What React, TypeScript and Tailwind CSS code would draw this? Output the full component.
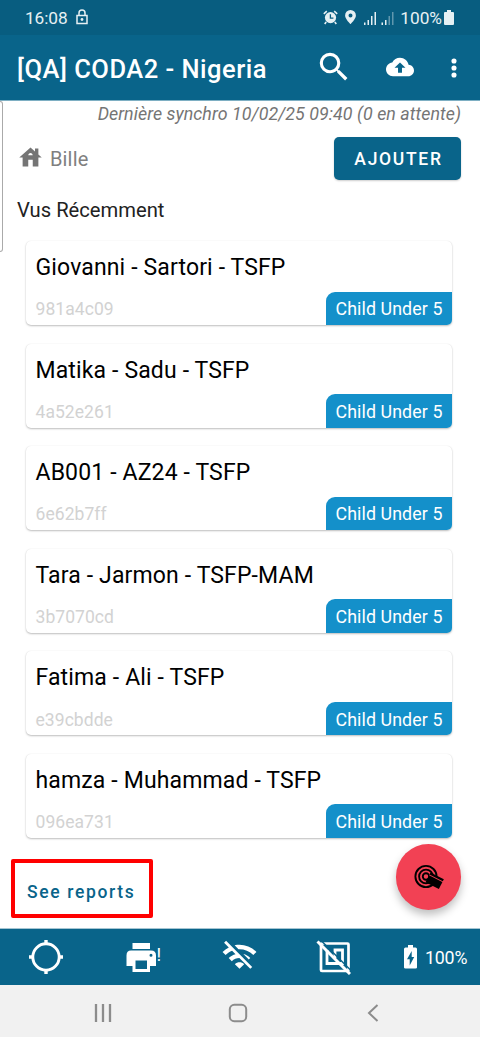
import type { ReactNode } from "react";

const people = [
  { name: "Giovanni - Sartori - TSFP", id: "981a4c09" },
  { name: "Matika - Sadu - TSFP", id: "4a52e261" },
  { name: "AB001 - AZ24 - TSFP", id: "6e62b7ff" },
  { name: "Tara - Jarmon - TSFP-MAM", id: "3b7070cd" },
  { name: "Fatima - Ali - TSFP", id: "e39cbdde" },
  { name: "hamza - Muhammad - TSFP", id: "096ea731" },
];

function Svg({ className, box = "0 0 24 24", children }: { className: string; box?: string; children: ReactNode }) {
  return (
    <svg className={`block shrink-0 ${className}`} viewBox={box} fill="currentColor">
      {children}
    </svg>
  );
}

function StatusBar() {
  return (
    <div className="flex h-[35px] items-center bg-[#085d80] pl-[25px] pr-[26px] text-[17.3px] leading-5 text-[#e6f0f3]">
      <span className="tracking-[-0.1px]">16:08</span>
      <Svg className="ml-[8px] mb-[2px] h-[16px] w-[12px]" box="0 0 12 16">
        <path d="M1 6.5h10v8H1zM3 6V4a3 3 0 0 1 6 0v2" fill="none" stroke="currentColor" strokeWidth="1.5" />
        <circle cx="6" cy="10.5" r="1.4" />
      </Svg>
      <div className="ml-auto flex items-center">
        <Svg className="h-[15px] w-[15px]" box="0 0 15 15">
          <circle cx="7.5" cy="7.6" r="5.6" />
          <path d="M.8 3.8 3.8 1.2M14.2 3.8 11.2 1.2M3.2 12l-1.5 2M11.8 12l1.5 2" stroke="currentColor" strokeWidth="1.6" />
          <path d="M7.4 4.2v4h3" fill="none" stroke="#085d80" strokeWidth="1.3" />
        </Svg>
        <Svg className="ml-[7px] mb-px h-[14px] w-[11px]" box="0 0 11 14">
          <path fillRule="evenodd" d="M5.5 0A5.4 5.4 0 0 0 .1 5.4C.1 9 5.5 14 5.5 14s5.4-5 5.4-8.6A5.4 5.4 0 0 0 5.5 0zm0 3.4a2 2 0 1 1 0 4 2 2 0 0 1 0-4z" />
        </Svg>
        <Svg className="ml-[8px] h-[14px] w-[30px]" box="0 0 30 14">
          <path d="M0 11.5h1.5V14H0zM3.5 9H5v5H3.5zM7 5h1.5v9H7zM10.5 1H12v13h-1.5zM17.5 11.5H19V14h-1.5zM21 9h1.5v5H21z" />
          <path d="M24.5 5H26v9h-1.5zM28 1h1.5v13H28z" opacity=".4" />
        </Svg>
        <span className="ml-[6px]">100%</span>
        <Svg className="ml-[2px] mb-px h-[15px] w-[10px]" box="0 0 10 15">
          <path d="M3 0h4v2h2q1 0 1 1v11q0 1-1 1H1q-1 0-1-1V3q0-1 1-1h2z" />
        </Svg>
      </div>
    </div>
  );
}

function AppBar() {
  return (
    <div className="flex h-[66px] items-center border-b border-[#7eafc3] bg-[#09648a] pl-[17px] text-white">
      <h1 className="mt-[4px] w-[298px] whitespace-nowrap text-[25.5px] font-medium tracking-[0.5px]">[QA] CODA2 - Nigeria</h1>
      <Svg className="mb-px h-[38px] w-[38px]">
        <path d="M15.5 14h-.79l-.28-.27A6.47 6.47 0 0 0 16 9.5 6.5 6.5 0 1 0 9.5 16c1.61 0 3.09-.59 4.23-1.57l.27.28v.79l5 4.99L20.49 19l-4.99-5zm-6 0C7.01 14 5 11.99 5 9.5S7.01 5 9.5 5 14 7.01 14 9.5 11.99 14 9.5 14z" />
      </Svg>
      <Svg className="mb-px ml-[33px] h-[28px] w-[28px]">
        <path d="M19.35 10.04C18.67 6.59 15.64 4 12 4 9.11 4 6.6 5.64 5.35 8.04 2.34 8.36 0 10.91 0 14c0 3.31 2.69 6 6 6h13c2.76 0 5-2.24 5-5 0-2.64-2.05-4.78-4.65-4.96zM13.7 12.7v4.2h-3.4v-4.2H7.3L12 8.2l4.7 4.5h-3z" />
      </Svg>
      <Svg className="ml-[26px] h-[28px] w-[28px]">
        <circle cx="12" cy="6" r="2.2" />
        <circle cx="12" cy="12" r="2.2" />
        <circle cx="12" cy="18" r="2.2" />
      </Svg>
    </div>
  );
}

function PersonCard({ name, id }: { name: string; id: string }) {
  return (
    <li className="flex h-[84px] flex-col justify-between rounded-[5px] bg-white shadow-[0_1px_2px_rgba(0,0,0,0.25),0_0_1px_rgba(0,0,0,0.1)]">
      <div className="pl-[9.5px] pt-[10px] text-[23px] leading-[34px] tracking-[0.14px] text-black">{name}</div>
      <div className="flex h-[33.5px] items-center justify-between">
        <span className="pl-[9.5px] pt-[2px] text-[17.5px] leading-5 tracking-[0.06px] text-[#d2d2d2]">{id}</span>
        <span className="flex h-full w-[126px] items-center justify-center rounded-br-[5px] rounded-tl-[9px] bg-[#1490ca] pt-[2.5px] text-[17.8px] tracking-[0.1px] text-white">
          Child Under 5
        </span>
      </div>
    </li>
  );
}

function BottomBar() {
  return (
    <div className="flex h-[57px] items-center border-t border-[#a5c5d2] bg-[#09648a] text-white">
      <Svg className="ml-[29px] h-[34px] w-[34px]" box="0 0 34 34">
        <circle cx="17" cy="17" r="13.2" fill="none" stroke="currentColor" strokeWidth="2.9" />
        <path d="M17 0v5M17 29v5M0 17h5M29 17h5" stroke="currentColor" strokeWidth="3.4" />
      </Svg>
      <Svg className="ml-[63px] h-[29px] w-[30px]" box="0 0 30 29">
        <path fillRule="evenodd" d="M6.5 0H24v6H6.5zM5 7.5h20q5 0 5 5V23h-6v6H6.5v-6H.5V12.5q0-5 4.5-5zM9.5 17.5V26H21v-8.5zM25 10.8a1.5 1.5 0 1 0 0 3 1.5 1.5 0 0 0 0-3z" />
      </Svg>
      <span className="-mt-[5px] w-[6px] pl-[0.5px] text-[18px] leading-5">!</span>
      <Svg className="ml-[59px] -mt-px h-[37px] w-[37px]">
        <path d="M22.99 9C19.15 5.16 13.8 3.76 8.84 4.78l2.52 2.52c3.47-.17 6.99 1.05 9.63 3.7l2-2zm-4 4c-1.29-1.29-2.84-2.13-4.49-2.56l3.53 3.53.96-.97zM2 3.05 5.07 6.1C3.6 6.82 2.22 7.78 1 9l1.99 2c1.24-1.24 2.67-2.16 4.2-2.77l2.24 2.24C7.81 10.89 6.27 11.73 5 13v.01L6.99 15c1.36-1.36 3.14-2.04 4.92-2.06L18.98 20l1.27-1.26L3.29 1.79 2 3.05zM9 17l3 3 3-3c-1.65-1.66-4.34-1.66-6 0z" />
      </Svg>
      <Svg className="ml-[58px] h-[35px] w-[35px]" box="0 0 35 35">
        <rect x="5" y="3.5" width="27.5" height="27.5" rx="1" fill="none" stroke="currentColor" strokeWidth="2.7" />
        <path d="M11 10v13.5h15.5V10H19v8" fill="none" stroke="currentColor" strokeWidth="2.8" />
        <path d="M4-.5l33 33" stroke="#09648a" strokeWidth="1.5" />
        <path d="M1.5 1.5l32.5 32.5" stroke="currentColor" strokeWidth="3" />
      </Svg>
      <Svg className="ml-[53px] h-[24px] w-[13px]" box="0 0 13 24">
        <path fillRule="evenodd" d="M4 0h5v2.5h2.5Q13 2.5 13 4v18.5q0 1-1.5 1h-10Q0 23.5 0 22.5V4q0-1.5 1.5-1.5H4zM7.7 6 3 14.3h2.7V20.5L10.2 12H7.7z" />
      </Svg>
      <span className="ml-[8px] pt-[2px] text-[17.8px] tracking-[-0.2px]">100%</span>
    </div>
  );
}

function SystemNav() {
  return (
    <div className="flex h-[52px] items-center bg-[#f1f1f1] pt-[3px] text-[#8c8c8c]">
      <Svg className="ml-[94px] h-[18px] w-[18px]" box="0 0 18 18">
        <path d="M2 0v18M9 0v18M16 0v18" stroke="currentColor" strokeWidth="2.3" />
      </Svg>
      <Svg className="ml-[116px] h-[20px] w-[20px]" box="0 0 20 20">
        <rect x="1.8" y="1.8" width="16.4" height="16.4" rx="4.5" fill="none" stroke="currentColor" strokeWidth="2" />
      </Svg>
      <Svg className="ml-[119px] h-[18px] w-[12px]" box="0 0 12 18">
        <path d="M10.5 1 2 9l8.5 8" fill="none" stroke="currentColor" strokeWidth="2" />
      </Svg>
    </div>
  );
}

export default function App() {
  return (
    <div className="relative flex h-[1037px] w-[480px] flex-col overflow-hidden bg-white font-['Roboto',sans-serif]">
      <StatusBar />
      <AppBar />
      <main className="flex flex-1 flex-col">
        <p className="h-[27px] pr-[19px] text-right text-[17.8px] italic leading-[26px] tracking-[0.06px] text-[#757575]">
          Dernière synchro 10/02/25 09:40 (0 en attente)
        </p>
        <div className="mt-[9px] flex h-[43px] items-center pl-[17px] pr-[19px]">
          <Svg className="mb-[2px] h-[27px] w-[27px] text-[#757575]">
            <path d="M19 9.3V4h-3v2.6L12 3 2 12h3v8h5v-6h4v6h5v-8h3l-3-2.7zm-9 .7c0-1.1.9-2 2-2s2 .9 2 2h-4z" />
          </Svg>
          <span className="ml-[6px] text-[20px] tracking-[0.15px] text-[#808080]">Bille</span>
          <button className="ml-auto h-[43px] w-[127px] rounded-[5px] bg-[#09648a] pl-[2px] pt-[2px] text-[17.5px] font-medium tracking-[1.7px] text-white shadow-[0_1px_2px_rgba(0,0,0,0.2)]">
            AJOUTER
          </button>
        </div>
        <h2 className="mt-[17px] pl-[17px] text-[20.2px] leading-[26px] text-[#222]">Vus Récemment</h2>
        <ul className="mt-[18px] flex flex-col gap-[18.6px] pl-[26px] pr-[28px]">
          {people.map((p) => (
            <PersonCard key={p.id} name={p.name} id={p.id} />
          ))}
        </ul>
        <button className="ml-[11px] mt-[21px] h-[59px] w-[142px] rounded-[2px] border-4 border-[#ff0000] pl-[12px] pt-[7px] text-left text-[17.5px] font-medium tracking-[1.65px] text-[#09648a]">
          See reports
        </button>
      </main>
      <BottomBar />
      <SystemNav />
      <div className="absolute left-0 top-[101px] h-[151px] w-[3px] rounded-r-[4px] border-y border-r border-[#aaa]" />
      <button className="absolute left-[396px] top-[844px] h-[66px] w-[65px] rounded-full bg-[#f24154] text-black shadow-[0_5px_9px_rgba(0,0,0,0.25)]">
        <Svg className="h-[66px] w-[66px]" box="0 0 66 66">
          <g fill="none" stroke="currentColor" strokeWidth="1.9">
            <circle cx="30" cy="32.5" r="10.6" />
            <circle cx="30" cy="32.5" r="6.9" />
            <circle cx="30" cy="32.5" r="3.2" />
          </g>
          <g transform="rotate(27 38 37)">
            <path d="M31 31h15v11H31z" />
            <path d="M31 33.7h16" stroke="#f24154" strokeWidth="1" />
          </g>
        </Svg>
      </button>
    </div>
  );
}
